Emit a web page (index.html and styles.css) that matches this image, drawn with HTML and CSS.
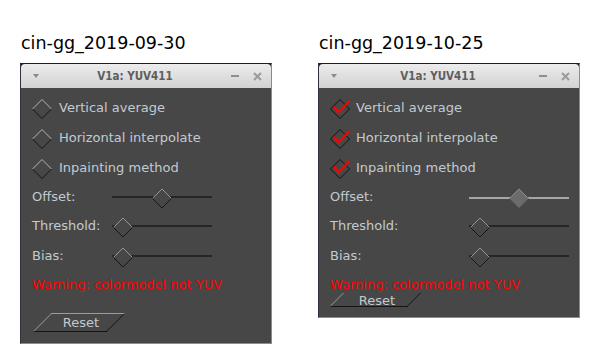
FILE: index.html
```html
<!DOCTYPE html>
<html lang="en">
<head>
  <meta charset="UTF-8" />
  <title>V1a: YUV411 — cin-gg comparison</title>
  <link rel="stylesheet" href="styles.css">
</head>
<body>
  <!-- shared glyphs -->
  <svg class="sprite" aria-hidden="true">
    <symbol id="box-off" viewBox="0 0 22 22">
      <path d="M1.5 11 L11 1.5 L20.5 11" stroke="#b5b5b5" fill="none"/>
      <path d="M1.5 11 L11 20.5 L20.5 11" stroke="#141414" fill="none"/>
    </symbol>
    <symbol id="box-on" viewBox="0 0 22 22">
      <path d="M1.5 11 L11 1.5 L20.5 11 L11 20.5 Z" stroke="#121212" fill="none"/>
      <path d="M5.5 9.5 L9.5 14.5 L20 3.5" stroke="#ff0000" stroke-width="2.4" fill="none" stroke-linecap="round" stroke-linejoin="round"/>
    </symbol>
    <symbol id="thumb" viewBox="0 0 20 21">
      <path d="M0.5 10.5 L10 1 L19.5 10.5 L10 20 Z" fill="#474747"/>
      <path d="M0.5 10.5 L10 1 L19.5 10.5" stroke="#959595" fill="none"/>
      <path d="M0.5 10.5 L10 20 L19.5 10.5" stroke="#161616" fill="none"/>
    </symbol>
    <symbol id="thumb-hot" viewBox="0 0 20 21">
      <path d="M0.5 10.5 L10 1 L19.5 10.5 L10 20 Z" fill="#6b6b6b"/>
      <path d="M0.5 10.5 L10 1 L19.5 10.5" stroke="#8c8c8c" fill="none"/>
      <path d="M0.5 10.5 L10 20 L19.5 10.5" stroke="#5a5a5a" fill="none"/>
    </symbol>
    <symbol id="close" viewBox="0 0 9 9">
      <path d="M1 1 L8 8 M8 1 L1 8" stroke="#9a9a9a" stroke-width="2" fill="none"/>
    </symbol>
  </svg>

  <div class="page">
    <section class="shot">
      <h2 class="version">cin-gg_2019-09-30</h2>
      <div class="win win-old">
        <div class="titlebar">
          <span class="tb-menu"></span>
          <span class="tb-title">V1a: YUV411</span>
          <span class="tb-min"></span>
          <svg class="tb-close"><use href="#close"/></svg>
        </div>
        <div class="win-body">
          <div class="check"><svg class="box"><use href="#box-off"/></svg><span>Vertical average</span></div>
          <div class="check"><svg class="box"><use href="#box-off"/></svg><span>Horizontal interpolate</span></div>
          <div class="check"><svg class="box"><use href="#box-off"/></svg><span>Inpainting method</span></div>

          <div class="field first">
            <span class="field-label">Offset:</span>
            <div class="slider"><div class="track"></div><svg class="thumb" style="left:40px"><use href="#thumb"/></svg></div>
          </div>
          <div class="field">
            <span class="field-label">Threshold:</span>
            <div class="slider"><div class="track"></div><svg class="thumb" style="left:1px"><use href="#thumb"/></svg></div>
          </div>
          <div class="field">
            <span class="field-label">Bias:</span>
            <div class="slider"><div class="track"></div><svg class="thumb" style="left:1px"><use href="#thumb"/></svg></div>
          </div>

          <p class="warning">Warning: colormodel not YUV</p>
          <button class="reset">Reset</button>
        </div>
      </div>
    </section>

    <section class="shot shot-new">
      <h2 class="version">cin-gg_2019-10-25</h2>
      <div class="win win-new">
        <div class="titlebar">
          <span class="tb-menu"></span>
          <span class="tb-title">V1a: YUV411</span>
          <span class="tb-min"></span>
          <svg class="tb-close"><use href="#close"/></svg>
        </div>
        <div class="win-body">
          <div class="check"><svg class="box"><use href="#box-on"/></svg><span>Vertical average</span></div>
          <div class="check"><svg class="box"><use href="#box-on"/></svg><span>Horizontal interpolate</span></div>
          <div class="check"><svg class="box"><use href="#box-on"/></svg><span>Inpainting method</span></div>

          <div class="field first">
            <span class="field-label">Offset:</span>
            <div class="slider"><div class="track hot"></div><svg class="thumb" style="left:40px"><use href="#thumb-hot"/></svg></div>
          </div>
          <div class="field">
            <span class="field-label">Threshold:</span>
            <div class="slider"><div class="track"></div><svg class="thumb" style="left:1px"><use href="#thumb"/></svg></div>
          </div>
          <div class="field">
            <span class="field-label">Bias:</span>
            <div class="slider"><div class="track"></div><svg class="thumb" style="left:1px"><use href="#thumb"/></svg></div>
          </div>

          <p class="warning">Warning: colormodel not YUV</p>
          <button class="reset">Reset</button>
        </div>
      </div>
    </section>
  </div>
</body>
</html>
```

FILE: styles.css
```css
* {
  box-sizing: border-box;
}

body {
  margin: 0;
  background: #fff;
  font-family: 'DejaVu Sans', sans-serif;
}

.sprite {
  display: none;
}

.page {
  display: flex;
  padding-top: 33px;
}

.shot {
  margin-left: 20px;
  width: 252px;
}

.shot-new {
  margin-left: 46px;
  width: 262px;
}

.version {
  margin: 0 0 10px 1px;
  font-size: 17.5px;
  line-height: 20px;
  font-weight: normal;
  color: #000;
}

/* window frame */
.win {
  border: 1px solid;
  border-color: #1e1b2d #8a8a8a #8e8e8e #2e3140;
  background: #1e1b2d;
}

.titlebar {
  height: 24px;
  display: flex;
  align-items: center;
  padding: 0 9px 0 12px;
  border-radius: 4px 4px 0 0;
  background: linear-gradient(#ececec, #d2d2d2);
}

.tb-menu {
  width: 0;
  height: 0;
  border-left: 3.5px solid transparent;
  border-right: 3.5px solid transparent;
  border-top: 4px solid #8a8a8a;
}

.tb-title {
  flex: 1;
  text-align: center;
  font-family: 'DejaVu Sans Condensed', 'DejaVu Sans', sans-serif;
  font-weight: bold;
  font-size: 11.5px;
  color: #5e5e5e;
}

.tb-min {
  width: 8px;
  height: 2px;
  margin-right: 14px;
  background: #8e8e8e;
}

.tb-close {
  width: 9px;
  height: 9px;
}

.win-body {
  background: #474747;
  padding: 4px 10px 11px 11px;
  color: #c3cad2;
  font-size: 13px;
}

.win-new .win-body {
  padding-bottom: 10px;
}

/* checkboxes */
.check {
  display: flex;
  align-items: center;
  height: 30px;
}

.box {
  width: 22px;
  height: 22px;
  margin: 4px 6px 0 -1px;
}

.win-new .box {
  margin-right: 5px;
}

/* sliders */
.field {
  display: flex;
  align-items: center;
  height: 30px;
}

.field.first {
  height: 28px;
}

.field-label {
  width: 80px;
}

.win-new .field-label {
  width: auto;
}

.slider {
  position: relative;
  width: 100px;
  height: 21px;
  margin-top: 4px;
}

.win-new .slider {
  margin-left: auto;
}

.track {
  margin-top: 8px;
  height: 2px;
  background: #8d8d8d;
  border-bottom: 2px solid #262626;
}

.track.hot {
  margin-top: 9px;
  border-bottom: 0;
  background: #a6a6a6;
}

.thumb {
  position: absolute;
  top: 0;
  width: 20px;
  height: 21px;
}

.warning {
  margin: 0;
  height: 30px;
  line-height: 30px;
  color: #ff0000;
}

/* slanted reset button */
.reset {
  display: block;
  position: relative;
  width: 93px;
  height: 19px;
  margin: 13px 0 0 0;
  padding: 0 0 0 5px;
  border: 0;
  background: none;
  font-family: 'DejaVu Sans', sans-serif;
  font-size: 13px;
  line-height: 19px;
  color: #c3cad2;
}

.reset::before {
  content: '';
  position: absolute;
  top: 0;
  bottom: 0;
  left: 9.5px;
  right: 9.5px;
  transform: skewX(-45deg);
  border-top: 1px solid #9c9c9c;
  border-left: 1px solid #9c9c9c;
  border-bottom: 1px solid #151515;
  border-right: 1px solid #151515;
}

.win-new .reset {
  width: 92px;
  height: 14px;
  margin: -7px 0 0 -1px;
  padding-left: 4px;
  line-height: 9px;
}

.win-new .reset::before {
  left: 7px;
  right: 7px;
  border-top: 0;
}
```
